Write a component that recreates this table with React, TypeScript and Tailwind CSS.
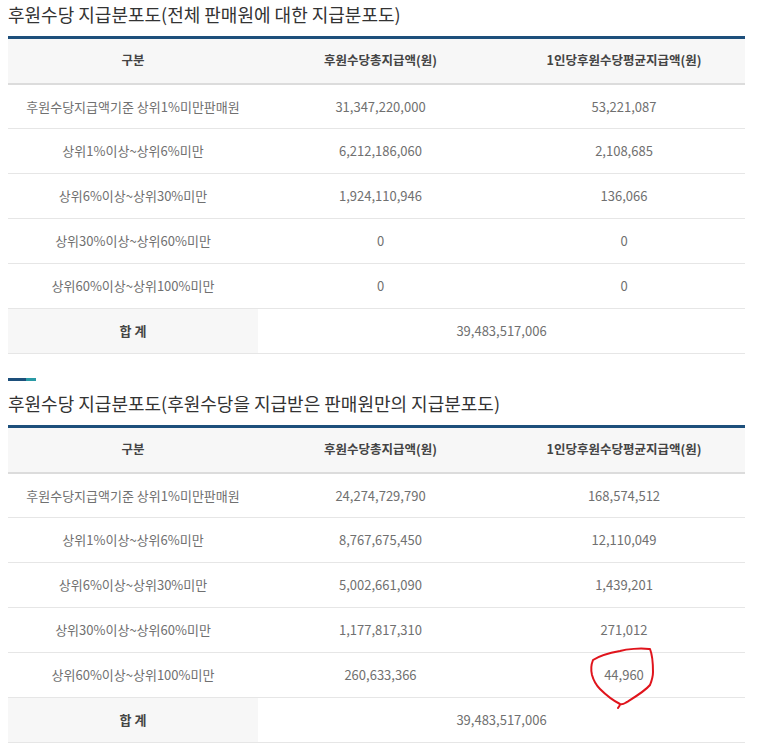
const font = { fontFamily: '"Malgun Gothic", "Noto Sans CJK KR", "Noto Sans", sans-serif' };

type Row = { label: string; total: string; avg: string; mark?: boolean };

const table1: Row[] = [
  { label: "후원수당지급액기준 상위1%미만판매원", total: "31,347,220,000", avg: "53,221,087" },
  { label: "상위1%이상~상위6%미만", total: "6,212,186,060", avg: "2,108,685" },
  { label: "상위6%이상~상위30%미만", total: "1,924,110,946", avg: "136,066" },
  { label: "상위30%이상~상위60%미만", total: "0", avg: "0" },
  { label: "상위60%이상~상위100%미만", total: "0", avg: "0" },
];

const table2: Row[] = [
  { label: "후원수당지급액기준 상위1%미만판매원", total: "24,274,729,790", avg: "168,574,512" },
  { label: "상위1%이상~상위6%미만", total: "8,767,675,450", avg: "12,110,049" },
  { label: "상위6%이상~상위30%미만", total: "5,002,661,090", avg: "1,439,201" },
  { label: "상위30%이상~상위60%미만", total: "1,177,817,310", avg: "271,012" },
  { label: "상위60%이상~상위100%미만", total: "260,633,366", avg: "44,960", mark: true },
];

function Circle() {
  return (
    <svg
      className="absolute top-[-9px] left-[calc(50%-39px)] pointer-events-none"
      width="76"
      height="68"
      viewBox="0 0 76 68"
      fill="none"
    >
      <path
        d="M64 5 C55 4 42 5 35 7 C24 9 14 12 8 16 C6 21 6 27 7 31 C9 38 12 42 15 45 C22 52 29 57 35 60 C38 61 40 59 42 58 C50 53 60 47 65 41 C67 36 68 32 68 28 C68 20 67 10 65 5 M35 60 C35 62 34 63 33 64"
        stroke="#e0141c"
        strokeWidth="2"
        strokeLinecap="round"
        strokeLinejoin="round"
      />
    </svg>
  );
}

function DataTable({ rows }: { rows: Row[] }) {
  return (
    <table className="w-[737px] border-collapse table-fixed text-[13px] text-[#707070]">
      <colgroup>
        <col className="w-[250px]" />
        <col className="w-[245px]" />
        <col className="w-[242px]" />
      </colgroup>
      <thead>
        <tr className="h-[46px] bg-[#f7f7f7] border-t-[3px] border-t-[#1d4f7b] border-b-[2px] border-b-[#dcdcdc]">
          <th className="font-bold text-[#444] text-[12.5px]">구분</th>
          <th className="font-bold text-[#444] text-[12.5px]">후원수당총지급액(원)</th>
          <th className="font-bold text-[#444] text-[12.5px]">1인당후원수당평균지급액(원)</th>
        </tr>
      </thead>
      <tbody>
        {rows.map((r) => (
          <tr key={r.label} className="h-[45px] border-b border-b-[#e6e6e6]">
            <td className="text-center">{r.label}</td>
            <td className="text-center">{r.total}</td>
            <td className="text-center relative">
              {r.avg}
              {r.mark && <Circle />}
            </td>
          </tr>
        ))}
        <tr className="h-[45px] border-b border-b-[#e6e6e6]">
          <td className="text-center bg-[#f7f7f7] font-bold text-[#444]">합 계</td>
          <td colSpan={2} className="text-center">
            39,483,517,006
          </td>
        </tr>
      </tbody>
    </table>
  );
}

export default function App() {
  return (
    <div className="bg-white w-[773px] h-[744px] overflow-hidden pl-2" style={font}>
      <h2 className="text-[18px] text-[#333] leading-[28px] h-[36px] font-normal">
        후원수당 지급분포도(전체 판매원에 대한 지급분포도)
      </h2>
      <DataTable rows={table1} />
      <div className="mt-[24px] flex h-[3px] w-[28px]">
        <div className="w-[18px] bg-[#1d4f7b]" />
        <div className="w-[10px] bg-[#2a9aa5]" />
      </div>
      <h2 className="text-[18px] text-[#333] leading-[28px] mt-[8px] h-[36px] font-normal">
        후원수당 지급분포도(후원수당을 지급받은 판매원만의 지급분포도)
      </h2>
      <DataTable rows={table2} />
    </div>
  );
}
